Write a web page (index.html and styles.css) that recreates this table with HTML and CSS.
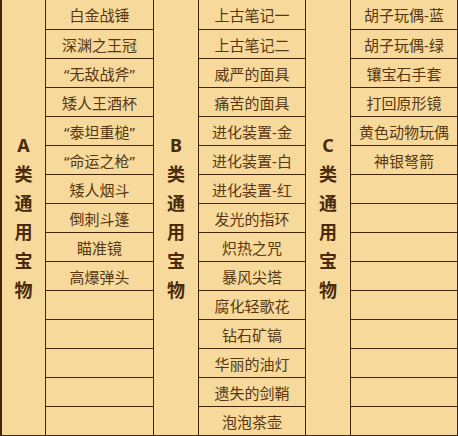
FILE: index.html
```html
<!DOCTYPE html>
<html lang="zh-CN">
<head>
<meta charset="utf-8">
<link rel="stylesheet" href="styles.css">
</head>
<body>
<div class="board">
  <div class="label"><span>A</span><span>类</span><span>通</span><span>用</span><span>宝</span><span>物</span></div>
  <ul class="items">
    <li>白金战锤</li><li>深渊之王冠</li><li>“无敌战斧”</li><li>矮人王酒杯</li><li>“泰坦重槌”</li><li>“命运之枪”</li><li>矮人烟斗</li><li>倒刺斗篷</li><li>瞄准镜</li><li>高爆弹头</li><li></li><li></li><li></li><li></li><li></li>
  </ul>
  <div class="label"><span>B</span><span>类</span><span>通</span><span>用</span><span>宝</span><span>物</span></div>
  <ul class="items">
    <li>上古笔记一</li><li>上古笔记二</li><li>威严的面具</li><li>痛苦的面具</li><li>进化装置-金</li><li>进化装置-白</li><li>进化装置-红</li><li>发光的指环</li><li>炽热之咒</li><li>暴风尖塔</li><li>腐化轻歌花</li><li>钻石矿镐</li><li>华丽的油灯</li><li>遗失的剑鞘</li><li>泡泡茶壶</li>
  </ul>
  <div class="label"><span>C</span><span>类</span><span>通</span><span>用</span><span>宝</span><span>物</span></div>
  <ul class="items">
    <li>胡子玩偶-蓝</li><li>胡子玩偶-绿</li><li>镶宝石手套</li><li>打回原形镜</li><li>黄色动物玩偶</li><li>神银弩箭</li><li></li><li></li><li></li><li></li><li></li><li></li><li></li><li></li><li></li>
  </ul>
</div>
</body>
</html>
```

FILE: styles.css
```css
html, body {
  margin: 0;
  padding: 0;
  background: #f6d99b;
}
.board {
  display: grid;
  grid-template-columns: 44px 108px 45px 107px 45px 107px;
  width: 458px;
  height: 436px;
  box-sizing: border-box;
  border-left: 2px solid #43260a;
  background: #f6d99b;
  font-family: "Noto Sans", "Noto Sans CJK SC", sans-serif;
  color: #583812;
}
.label {
  box-sizing: border-box;
  height: 436px;
  border-right: 1px solid #43260a;
  border-bottom: 1px solid #43260a;
  display: flex;
  flex-direction: column;
  justify-content: center;
  align-items: center;
  font-weight: bold;
  font-size: 18px;
  line-height: 29px;
  color: #4a2a0a;
}
.items {
  list-style: none;
  margin: 0;
  padding: 0;
  border-right: 1px solid #43260a;
}
.items li {
  box-sizing: border-box;
  height: 29px;
  border-bottom: 1px solid #43260a;
  display: flex;
  align-items: center;
  justify-content: center;
  font-size: 15px;
  white-space: nowrap;
}
.items li:first-child {
  height: 30px;
}
```
